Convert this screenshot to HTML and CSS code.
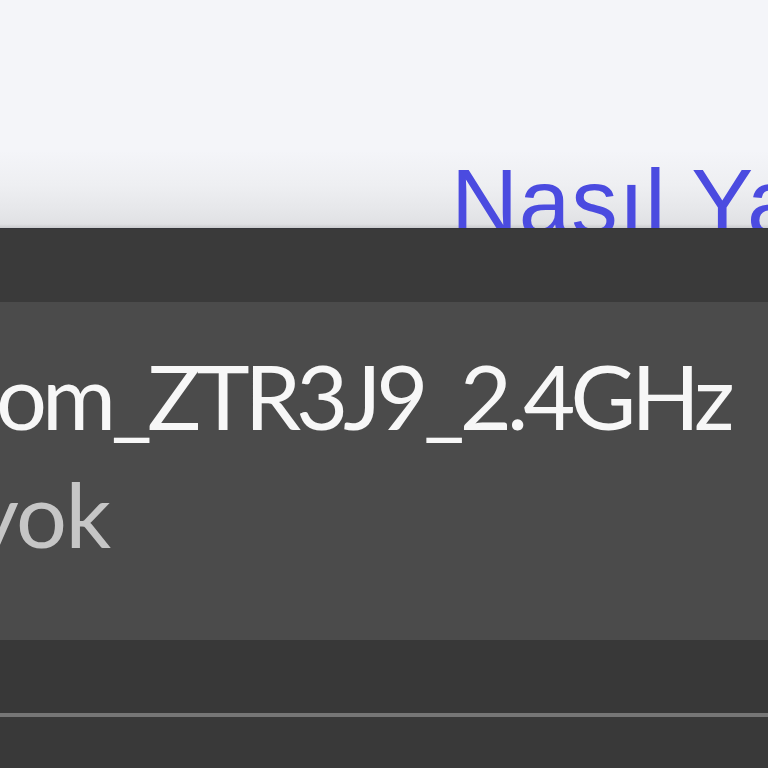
FILE: index.html
```html
<!DOCTYPE html>
<html lang="tr">
<head>
<meta charset="utf-8">
<title>Wi-Fi</title>
<link rel="stylesheet" href="styles.css">
</head>
<body>
<div class="page">
  <header class="top">
    <h1 class="help-link">Nasıl Yapılır</h1>
  </header>
  <div class="band-top"></div>
  <section class="network">
    <div class="net-name">om_ZTR3J9_2.4GHz</div>
    <div class="net-status">İnternet yok</div>
  </section>
  <div class="band-bottom"></div>
  <div class="divider"></div>
  <div class="footer"></div>
</div>
</body>
</html>
```

FILE: styles.css
```css
html, body {
  margin: 0;
  padding: 0;
  width: 768px;
  height: 768px;
  overflow: hidden;
  background: #393939;
}
.page {
  display: flex;
  flex-direction: column;
  width: 768px;
  height: 768px;
  overflow: hidden;
}
.top {
  height: 228px;
  flex: none;
  overflow: hidden;
  background: linear-gradient(to bottom, #f4f5f9 0px, #f4f5f9 150px, #eeeff2 185px, #e6e7ea 210px, #e0e1e4 224px, #c9cacd 228px);
  box-sizing: border-box;
  padding-left: 451px;
  padding-top: 147px;
}
.help-link {
  margin: 0;
  font-family: "Liberation Sans", Arial, sans-serif;
  font-weight: normal;
  font-size: 93px;
  line-height: 110px;
  letter-spacing: 0.7px;
  color: #4b4be0;
  white-space: nowrap;
}
.band-top {
  height: 74px;
  flex: none;
  background: #3a3a3a;
  border-top: 1px solid #34353a;
  box-sizing: border-box;
}
.network {
  height: 338px;
  flex: none;
  background: #4b4b4b;
  box-sizing: border-box;
  padding-top: 34px;
  overflow: hidden;
  font-family: Lato, "Noto Sans", sans-serif;
  font-size: 90px;
  line-height: 118px;
  white-space: nowrap;
}
.net-name {
  color: #f7f7f7;
  margin-left: -4px;
  letter-spacing: -5px;
}
.net-status {
  color: #c6c6c6;
  margin-left: -351px;
  letter-spacing: -1.5px;
}
.band-bottom {
  height: 73px;
  flex: none;
  background: #383838;
}
.divider {
  height: 4px;
  flex: none;
  background: #767676;
}
.footer {
  flex: 1;
  background: #393939;
}
```
